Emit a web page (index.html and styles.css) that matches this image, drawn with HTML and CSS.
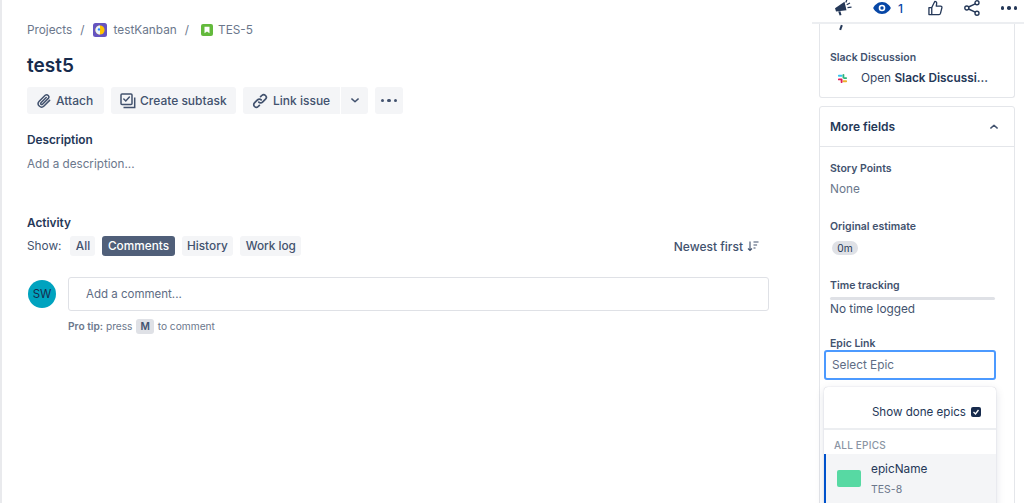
FILE: index.html
```html
<!DOCTYPE html>
<html lang="en">
<head>
<meta charset="utf-8">
<title>TES-5 test5</title>
<link rel="stylesheet" href="styles.css">
</head>
<body>
<div class="page">
  <main class="main">
    <nav class="crumbs">
      <span>Projects</span><span class="sep">/</span>
      <svg class="crumb-icon" viewBox="0 0 14 14" width="14" height="14"><rect width="14" height="14" rx="2.5" fill="#6554c0"/><circle cx="7" cy="7" r="4.6" fill="#ffc400"/><path d="M7 2.4A4.6 4.6 0 0 0 7 11.6Z" fill="#e9f4ff"/><circle cx="6" cy="6.4" r="1.2" fill="#2684ff"/></svg>
      <span>testKanban</span><span class="sep sep-b">/</span>
      <svg class="crumb-icon story" viewBox="0 0 12 12" width="12" height="12"><rect width="12" height="12" rx="2" fill="#63ba3c"/><path d="M3.5 2.7h5v6.6L6 7.4 3.5 9.3Z" fill="#fff"/></svg>
      <span>TES-5</span>
    </nav>
    <h1 class="title">test5</h1>
    <div class="actions">
      <button class="btn btn-attach"><svg viewBox="0 0 16 16" width="16" height="16" fill="none" stroke="#42526e" stroke-width="1.5" stroke-linecap="round"><path d="M13.6 7.4 8 13a3.3 3.3 0 0 1-4.8-4.7l6-6a2.2 2.2 0 0 1 3.1 3.1l-5.800 5.800a1 1 0 0 1-1.500-1.500l5.200-5.200"/></svg>Attach</button>
      <button class="btn btn-sub"><svg viewBox="0 0 16 16" width="16" height="16" fill="none" stroke="#42526e" stroke-width="1.5"><rect x="1" y="1" width="11" height="10.5" rx="1"/><path d="M3.800 6l2 2 3.600-4" stroke-linecap="round"/><path d="M14.700 4.500v10H3.500"/></svg>Create subtask</button>
      <div class="split">
        <button class="btn btn-link"><svg viewBox="0 0 16 16" width="16" height="16" fill="none" stroke="#42526e" stroke-width="1.7" stroke-linecap="round"><path d="M6.800 9.200a2.600 2.600 0 0 0 3.700 0l3-3a2.600 2.600 0 0 0-3.700-3.700L8.600 3.700"/><path d="M9.200 6.800a2.600 2.600 0 0 0-3.700 0l-3 3a2.600 2.600 0 0 0 3.700 3.700l1.200-1.200"/></svg>Link issue</button>
        <button class="btn btn-caret"><svg viewBox="0 0 10 6" width="8" height="5" fill="none" stroke="#42526e" stroke-width="1.8" stroke-linecap="round" stroke-linejoin="round"><path d="M1 1l4 3.600L9 1"/></svg></button>
      </div>
      <button class="btn btn-more"><span class="dots"><i></i><i></i><i></i></span></button>
    </div>
    <h2 class="label desc-label">Description</h2>
    <p class="placeholder">Add a description...</p>
    <h2 class="label activity-label">Activity</h2>
    <div class="show-row">
      <div class="filters">
        <span class="show">Show:</span>
        <button class="chip chip-all">All</button>
        <button class="chip active">Comments</button>
        <button class="chip">History</button>
        <button class="chip">Work log</button>
      </div>
      <div class="sort">Newest first
        <svg viewBox="0 0 12 11" width="12" height="11" fill="none" stroke="#42526e" stroke-width="1.1"><path d="M3 .5v9M1 7.500l2 2 2-2"/><path d="M6.500 1h5M6.500 4h3.600M6.500 7h2"/></svg>
      </div>
    </div>
    <div class="comment">
      <div class="avatar">SW</div>
      <div class="comment-body">
        <div class="comment-input">Add a comment...</div>
        <p class="tip"><b>Pro tip:</b> press <kbd>M</kbd> to comment</p>
      </div>
    </div>
  </main>
  <aside class="side">
    <div class="topbar">
      <svg class="ti" viewBox="0 0 17 16" width="17" height="16"><path d="M0 8.300 9.500 1.800l2 8.400L1 11.500Z" fill="#253858"/><path d="M3.200 11.600l2.200-.4 1.100 3.800-1.900.5Z" fill="#253858"/><path d="M11.700 4.800 15 3M12.500 7.600l4-.5M10.800 2.400 11.800 0" stroke="#253858" stroke-width="1.300" fill="none"/></svg>
      <span class="watch"><svg class="ti" viewBox="0 0 18 12" width="18" height="12"><path d="M9 0c4.600 0 7.800 3.700 8.800 6-1 2.300-4.200 6-8.800 6S1.200 8.300.2 6C1.200 3.700 4.400 0 9 0Z" fill="#0747a6"/><circle cx="9" cy="6" r="3.300" fill="#fff"/><circle cx="9" cy="6" r="1.700" fill="#0747a6"/></svg><span>1</span></span>
      <svg class="ti" viewBox="0 0 16 16" width="15" height="16" fill="none" stroke="#253858" stroke-width="1.400" stroke-linejoin="round"><path d="M1 7.500h3v7.500H1Z"/><path d="M4 7.500 7.200 1c1.700 0 2.300 1.200 2 2.600L8.800 6h4.700c1 0 1.600.9 1.300 1.800l-1.500 6c-.2.700-.8 1.200-1.500 1.200H4"/></svg>
      <svg class="ti" viewBox="0 0 16 16" width="16" height="16" fill="none" stroke="#253858" stroke-width="1.400"><circle cx="13" cy="2.800" r="2"/><circle cx="13" cy="13.200" r="2"/><circle cx="2.800" cy="8" r="2"/><path d="M4.600 7 11.200 3.800M4.600 9l6.600 3.200"/></svg>
      <span class="dots dark"><i></i><i></i><i></i></span>
    </div>
    <div class="card card-top">
      <span class="stub"></span>
      <h3 class="field-label slack-label">Slack Discussion</h3>
      <div class="slack-row">
        <svg viewBox="0 0 12 12" width="11" height="11"><rect x="1" y="2" width="5" height="2" rx="1" fill="#36c5f0"/><rect x="6" y="1" width="2" height="5" rx="1" fill="#2eb67d"/><rect x="6" y="8" width="5" height="2" rx="1" fill="#ecb22e"/><rect x="4" y="6" width="2" height="5" rx="1" fill="#e01e5a"/><rect x="7" y="4.500" width="4" height="2" rx="1" fill="#2eb67d"/><rect x="1" y="6" width="4" height="2" rx="1" fill="#e01e5a"/></svg>
        <span class="slack-text">Open <b>Slack Discussi...</b></span>
      </div>
    </div>
    <div class="card card-more">
      <div class="more-head">
        <span>More fields</span>
        <svg viewBox="0 0 10 6" width="8" height="5" fill="none" stroke="#42526e" stroke-width="1.800" stroke-linecap="round" stroke-linejoin="round"><path d="M1 5l4-3.600L9 5"/></svg>
      </div>
      <div class="fields">
        <h3 class="field-label">Story Points</h3>
        <p class="value muted">None</p>
        <h3 class="field-label">Original estimate</h3>
        <span class="pill">0m</span>
        <h3 class="field-label">Time tracking</h3>
        <div class="bar"></div>
        <p class="value logged">No time logged</p>
        <h3 class="field-label">Epic Link</h3>
        <div class="epic-field">
          <div class="select">Select Epic</div>
          <div class="menu">
            <div class="menu-head">Show done epics <span class="check"><svg viewBox="0 0 10 10" width="10" height="10" fill="none" stroke="#fff" stroke-width="1.300"><path d="M2.500 5l2 2 3-4"/></svg></span></div>
            <div class="menu-group">ALL EPICS</div>
            <div class="menu-item">
              <span class="swatch"></span>
              <div class="menu-text"><span class="epic-name">epicName</span><span class="epic-key">TES-8</span></div>
            </div>
          </div>
        </div>
      </div>
    </div>
  </aside>
</div>
</body>
</html>
```
FILE: styles.css
```css
* { box-sizing: border-box; }
html, body { margin: 0; height: 503px; overflow: hidden; background: #fff; }
body { font-family: Inter, "Liberation Sans", sans-serif; color: #172b4d; font-size: 12px; }
button { font: inherit; border: 0; cursor: pointer; }
h1, h2, h3, p { margin: 0; }
svg { flex: none; }

.page { display: flex; height: 503px; border-left: 2px solid #e9eaed; }
.main { width: 767px; padding: 21px 0 0 25px; flex: none; }

.crumbs { display: flex; align-items: center; height: 18px; color: #6b778c; font-size: 11.800px; }
.sep { margin: 0 8px 0 8px; }
.sep-b { margin: 0 12px 0 8px; }
.crumb-icon { margin-right: 7px; }
.crumb-icon.story { margin-right: 5px; }

.title { font-size: 19px; line-height: 28px; font-weight: 600; margin-top: 13px; color: #172b4d; }

.actions { display: flex; gap: 7px; margin-top: 7px; }
.btn { display: flex; align-items: center; gap: 4px; height: 27px; background: #f4f5f7; color: #42526e; border-radius: 3px; font-size: 12px; font-weight: 500; padding: 0 9px; white-space: nowrap; }
.btn-attach { width: 77px; }
.btn-sub { width: 125px; }
.btn-link { width: 97px; gap: 5px; border-radius: 3px 0 0 3px; }
.split { display: flex; gap: 1px; }
.btn-caret { width: 27px; padding: 0; justify-content: center; border-radius: 0 3px 3px 0; }
.btn-more { width: 28px; padding: 0; justify-content: center; }
.dots { display: inline-flex; gap: 3px; }
.dots i { width: 3.500px; height: 3.500px; border-radius: 50%; background: #42526e; display: block; }
.dots.dark i { background: #253858; }

.label { font-size: 11.800px; line-height: 16px; font-weight: 600; color: #253858; }
.desc-label { margin-top: 18px; }
.placeholder { margin-top: 8px; line-height: 16px; font-size: 11.700px; color: #6b778c; }
.activity-label { margin-top: 43px; }

.show-row { display: flex; justify-content: space-between; align-items: center; margin-top: 5px; height: 20px; width: 732px; }
.filters { display: flex; align-items: center; gap: 7px; }
.show { color: #42526e; font-size: 11.800px; margin-right: 2px; }
.chip { height: 20px; padding: 0 5.500px; background: #f4f5f7; color: #42526e; border-radius: 3px; font-size: 11.800px; font-weight: 500; }
.chip-all { width: 25px; padding: 0; }
.chip.active { background: #505f79; color: #fff; }
.sort { display: flex; align-items: center; gap: 4px; color: #42526e; font-size: 12px; font-weight: 500; }

.comment { display: flex; gap: 12px; margin-top: 21px; margin-left: 1px; }
.avatar { flex: none; width: 28px; height: 28px; margin-top: 3px; border-radius: 50%; background: #00a3bf; color: #172b4d; font-size: 11.500px; display: flex; align-items: center; justify-content: center; }
.comment-body { width: 701px; }
.comment-input { height: 34px; border: 1px solid #dfe1e6; border-radius: 3px; padding-left: 17px; line-height: 33px; font-size: 11.500px; color: #5e6c84; }
.tip { margin-top: 7px; font-size: 10.200px; line-height: 16px; color: #6b778c; }
.tip b { font-weight: 600; }
kbd { display: inline-block; font: inherit; font-weight: 600; color: #42526e; background: #dfe1e6; border-radius: 3px; padding: 0 4px; margin: 0 1px; line-height: 15px; }

.side { flex: 1; min-width: 0; }
.topbar { display: flex; align-items: center; gap: 21px; height: 24px; margin-left: 43px; padding: 0 0 6px 23px; border-bottom: 2px solid #eceef1; }
.watch { display: flex; align-items: center; gap: 7px; margin-right: 4px; color: #0747a6; font-size: 12px; font-weight: 500; }

.card { width: 196px; margin-left: 50px; border: 1px solid #e4e6ea; background: #fff; }
.card-top { position: relative; height: 74px; border-top: 0; border-radius: 0 0 3px 3px; padding: 27px 10px 0; }
.stub { position: absolute; left: 20px; top: 1px; width: 2px; height: 5px; background: #253858; transform: rotate(20deg); }
.field-label { font-size: 10.500px; line-height: 14px; font-weight: 600; color: #42526e; }
.slack-row { display: flex; align-items: center; margin-top: 5px; padding-left: 7px; height: 16px; }
.slack-text { margin-left: 13px; color: #344563; font-size: 11.800px; white-space: nowrap; }
.slack-text b { font-weight: 600; color: #253858; }

.card-more { margin-top: 8px; height: 420px; border-radius: 3px; }
.more-head { display: flex; justify-content: space-between; align-items: center; height: 40px; padding: 0 16px 0 10px; border-bottom: 1px solid #e4e6ea; font-size: 12px; font-weight: 600; color: #253858; }
.fields { padding: 15px 10px 0; }
.value { font-size: 11.800px; line-height: 16px; margin-top: 5px; margin-bottom: 23px; }
.muted { color: #6b778c; }
.pill { display: block; width: 26px; height: 14px; margin: 7px 0 24px 2px; background: #dfe1e6; border-radius: 7px; color: #253858; font-size: 10.200px; line-height: 14px; text-align: center; }
.bar { width: 165px; height: 3px; margin-top: 4px; background: #dfe1e6; border-radius: 2px; }
.value.logged { margin: 1px 0 20px; color: #42526e; }
.epic-field { position: relative; width: 172px; margin: -1px 0 0 -6px; }
.select { height: 30px; border: 2px solid #4c9aff; border-radius: 3px; padding-left: 6px; line-height: 26px; color: #5e6c84; font-size: 11.800px; }
.menu { position: absolute; left: 0; top: 37px; width: 100%; height: 130px; background: #fff; border-radius: 4px; box-shadow: 0 0 1px rgba(9,30,66,.3), 0 3px 10px rgba(9,30,66,.13); }
.menu-head { display: flex; align-items: center; justify-content: flex-end; gap: 5px; height: 43px; padding: 9px 15px 0 0; border-bottom: 2px solid #eceef1; font-size: 11.600px; color: #253858; }
.check { width: 10px; height: 10px; background: #172b4d; border-radius: 2px; display: flex; }
.menu-group { height: 24px; padding-left: 10px; line-height: 31px; font-size: 10px; font-weight: 500; color: #8a94a3; letter-spacing: .2px; }
.menu-item { display: flex; height: 60px; background: #f4f5f7; border-left: 2px solid #0052cc; padding-left: 11px; }
.swatch { flex: none; width: 24px; height: 17px; margin-top: 16px; border-radius: 2px; background: #57d9a3; }
.menu-text { display: flex; flex-direction: column; margin-left: 10px; padding-top: 7px; }
.epic-name { font-size: 11.800px; line-height: 16px; color: #253858; }
.epic-key { font-size: 10.500px; line-height: 14px; margin-top: 6px; color: #6b778c; }
```
